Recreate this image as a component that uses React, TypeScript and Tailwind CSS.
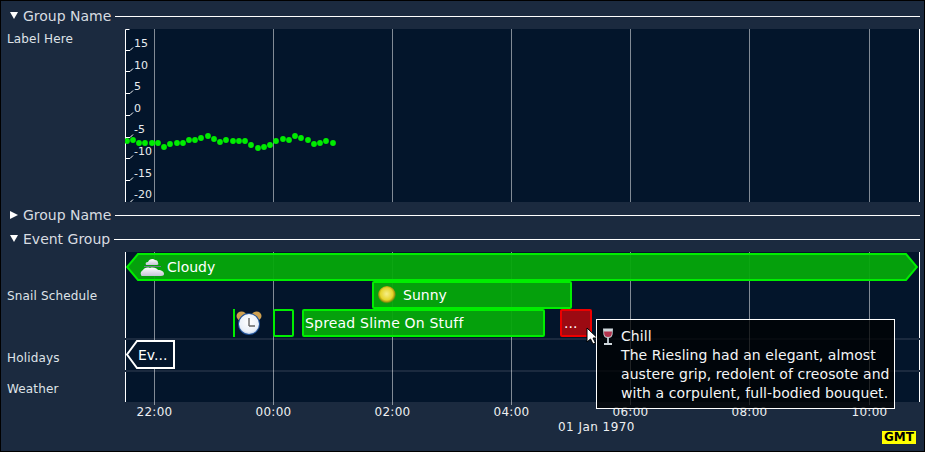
import React from 'react'

const font = { fontFamily: '"DejaVu Sans", Verdana, sans-serif' }

const TIME_LABELS = ['22:00', '00:00', '02:00', '04:00', '06:00', '08:00', '10:00']

const Y_TICKS = [
  { label: '15', y: 21 },
  { label: '10', y: 42 },
  { label: '5', y: 64 },
  { label: '0', y: 86 },
  { label: '-5', y: 108 },
  { label: '-10', y: 129 },
  { label: '-15', y: 151 },
  { label: '-20', y: 173 },
]

// plotted values, read off in plot coordinates
const POINTS: [number, number][] = [
  [2, 112], [8, 111], [14, 114], [20, 114], [27, 114], [33, 114], [39, 118], [45, 115],
  [52, 114], [58, 114], [64, 111], [70, 111], [76, 109], [83, 107], [89, 110], [95, 113],
  [101, 111], [108, 112], [114, 112], [120, 112], [126, 116], [133, 119], [139, 118], [145, 116],
  [151, 112], [158, 110], [164, 111], [170, 107], [176, 109], [183, 111], [189, 115], [195, 114],
  [201, 112], [208, 114],
]

function GroupHeader({ title, open = true }: { title: string; open?: boolean }) {
  return (
    <div className="flex h-6 items-center pl-[9px] pr-[4px]">
      <svg width="8" height="8" viewBox="0 0 8 8" className="mr-[5px] shrink-0">
        {open ? <polygon points="0,0 8,0 4,7" fill="#fff" /> : <polygon points="0,0 8,4 0,8" fill="#fff" />}
      </svg>
      <span className="text-sm leading-none text-[#d8dce1]">{title}</span>
      <div className="ml-[4px] h-px flex-1 bg-white" />
    </div>
  )
}

function GridLines({ tail = false }: { tail?: boolean }) {
  return (
    <div className={`absolute left-[29px] right-0 top-0 flex ${tail ? '-bottom-[3px]' : 'bottom-0'}`}>
      {TIME_LABELS.map((t) => (
        <div key={t} className="w-[119px] shrink-0 last:ml-px last:w-px">
          <div className="h-full w-px bg-white/50" />
        </div>
      ))}
    </div>
  )
}

function ValuePlot() {
  return (
    <div className="relative h-[173px] w-[795px] border-r border-white bg-[#03152b]">
      <GridLines />
      <svg width="795" height="173" className="absolute left-0 top-0">
        <path d="M4.500 0.500H0.500V173" fill="none" stroke="#fff" />
        {Y_TICKS.map((t) => (
          <path key={t.label} d={`M1 ${t.y + 0.5}H5L8 ${t.y - 2.5}`} fill="none" stroke="#fff" />
        ))}
        {POINTS.map(([x, y]) => (
          <circle key={x} cx={x} cy={y} r="2.900" fill="#00ec00" />
        ))}
      </svg>
      <div className="absolute left-[9px] top-[9px] flex flex-col">
        {Y_TICKS.map((t) => (
          <span key={t.label} className="h-[21.6px] text-[11px] leading-[11px] text-[#e8ebee]">
            {t.label}
          </span>
        ))}
      </div>
    </div>
  )
}

function CloudIcon() {
  return (
    <svg width="25" height="20" viewBox="0 0 25 20" className="shrink-0">
      <defs>
        <linearGradient id="cloud" x1="0" y1="0" x2="0" y2="1">
          <stop offset="0" stopColor="#fff" />
          <stop offset="1" stopColor="#c6c4d6" />
        </linearGradient>
      </defs>
      <path d="M6 8c-1-2 0-3 2-3 1-3 5-4 7-2 2 0 3 1 3 3 1 1 0 2-1 2z" fill="url(#cloud)" />
      <rect x="4" y="9" width="17" height="1" fill="#6d7a88" />
      <path d="M1 18c-1-2 0-4 2-5 1-2 4-3 7-2 3-1 7 0 8 2 4 0 6 2 6 4 0 1-1 2-3 2H4c-2 0-3 0-3-1z" fill="url(#cloud)" />
    </svg>
  )
}

function SunIcon() {
  return (
    <svg width="18" height="18" viewBox="0 0 18 18" className="shrink-0">
      <defs>
        <radialGradient id="sun" cx="0.48" cy="0.44" r="0.55">
          <stop offset="0" stopColor="#f6ee88" />
          <stop offset="0.62" stopColor="#e5d42a" />
          <stop offset="0.8" stopColor="#a99a10" />
          <stop offset="1" stopColor="#6f7a0a" stopOpacity="0" />
        </radialGradient>
      </defs>
      <circle cx="9" cy="9" r="9" fill="url(#sun)" />
    </svg>
  )
}

function ClockIcon() {
  return (
    <svg width="26" height="26" viewBox="0 0 26 26" className="ml-px shrink-0">
      <defs>
        <radialGradient id="face" cx="0.5" cy="0.4" r="0.65">
          <stop offset="0" stopColor="#fff" />
          <stop offset="0.75" stopColor="#eaf0f8" />
          <stop offset="1" stopColor="#a8c2e2" />
        </radialGradient>
      </defs>
      <ellipse cx="5.500" cy="6" rx="5" ry="4.500" fill="#cfa050" />
      <ellipse cx="20.500" cy="6" rx="5" ry="4.500" fill="#cfa050" />
      <circle cx="13" cy="14" r="11" fill="#1d4f96" />
      <circle cx="13" cy="14" r="10" fill="url(#face)" />
      <path d="M13 8v8M13 16h6" stroke="#666" strokeWidth="1.400" fill="none" />
    </svg>
  )
}

function WineIcon() {
  return (
    <svg width="14" height="18" viewBox="0 0 14 18" className="shrink-0">
      <path d="M2 0.500h10l-.5 6c-.3 2.500-2 3.500-4.500 3.500S2.800 9 2.500 6.500z" fill="#cfd8dc" />
      <path d="M3 3.500h8l-.4 3c-.3 1.800-1.600 2.500-3.600 2.500s-3.300-.7-3.600-2.500z" fill="#b3344e" />
      <rect x="6" y="10" width="2" height="5" fill="#b0bcc2" />
      <rect x="3" y="15" width="8" height="2" fill="#cfd8dc" />
    </svg>
  )
}

function CloudyBar() {
  return (
    <div className="relative flex h-[28px] w-[792px] items-center pl-[14px] text-sm text-white">
      <svg width="792" height="28" className="absolute left-0 top-0">
        <polygon
          points="12,1 780,1 791,14 780,27 12,27 1,14"
          fill="#05a80b"
          fillOpacity="0.95"
          stroke="#00ee00"
          strokeWidth="2"
        />
      </svg>
      <div className="relative flex items-center gap-[2px]">
        <CloudIcon />
        <span>Cloudy</span>
      </div>
    </div>
  )
}

function EvBar() {
  return (
    <div className="relative flex h-[30px] w-[50px] items-center pl-[12px] text-sm text-white">
      <svg width="50" height="30" className="absolute left-0 top-0">
        <polygon points="11,1 48,1 48,28 11,28 1,14.500" fill="#03152b" stroke="#fff" strokeWidth="2" />
      </svg>
      <span className="relative">Ev...</span>
    </div>
  )
}

function EventPlot() {
  const row = 'relative border-x border-white'
  const sep = 'h-[2px] bg-[#1b2a3f]'
  const bar = 'h-[28px] rounded-[2px] border-2 border-[#00ee00] bg-[#05a80b]/95 text-sm leading-[24px] text-white'
  return (
    <div className="relative flex h-[150px] w-[795px] flex-col bg-[#03152b]">
      <GridLines tail />

      <div className={`${row} h-[86px] pt-px`}>
        <CloudyBar />
        <div className="flex pl-[246px]">
          <div className={`${bar} flex w-[200px] items-center pl-[4px]`}>
            <SunIcon />
            <span className="ml-[7px]">Sunny</span>
          </div>
        </div>
        <div className="flex items-center pl-[107px]">
          <div className="h-[28px] w-[2px] bg-[#00ee00]" />
          <ClockIcon />
          <div className="ml-[11px] h-[28px] w-[21px] rounded-[2px] border-2 border-[#00ee00]" />
          <div className={`${bar} ml-[8px] w-[243px] whitespace-nowrap pl-[1px] tracking-[0.19px]`}>
            Spread Slime On Stuff
          </div>
          <div className="ml-[15px] h-[28px] w-[32px] rounded-[2px] border-2 border-[#ee0000] bg-[#9c0a12] pl-[2px] text-sm leading-[24px] text-white">
            ...
          </div>
        </div>
      </div>

      <div className={sep} />
      <div className={`${row} h-[30px]`}>
        <EvBar />
      </div>
      <div className={sep} />
      <div className={`${row} h-[30px]`} />
    </div>
  )
}

function Tooltip() {
  return (
    <div className="absolute left-[595px] top-[318px] flex h-[90px] w-[299px] gap-[6px] border border-white bg-black/75 pl-[4px] pt-[7px] text-sm leading-[19px] tracking-[0.08px] text-[#f4f5f6]">
      <div className="pt-[1px]">
        <WineIcon />
      </div>
      <div className="whitespace-nowrap">
        <div>Chill</div>
        <div>The Riesling had an elegant, almost</div>
        <div>austere grip, redolent of creosote and</div>
        <div>with a corpulent, full-bodied bouquet.</div>
      </div>
    </div>
  )
}

function Cursor() {
  return (
    <svg width="12" height="18" viewBox="0 0 12 18" className="absolute left-[585px] top-[326px]">
      <path d="M1 1v14l3.500-3 2.500 5 2.500-1-2.500-5h4.500z" fill="#fff" stroke="#000" strokeWidth="1" />
    </svg>
  )
}

export default function App() {
  return (
    <div
      className="relative h-[452px] w-[925px] overflow-hidden border border-black bg-[#1b2a3f] pt-[3px] text-[#dfe3e8]"
      style={font}
    >
      <GroupHeader title="Group Name" />
      <div className="mt-px flex">
        <div className="w-[124px] pl-[6px] pt-[3px] text-xs leading-[14px] tracking-[0.15px]">Label Here</div>
        <ValuePlot />
      </div>

      <div className="mt-px">
        <GroupHeader title="Group Name" open={false} />
        <GroupHeader title="Event Group" />
      </div>

      <div className="mt-px flex">
        <div className="flex w-[124px] flex-col pl-[6px] text-xs leading-[14px] tracking-[0.15px]">
          <div className="flex h-[88px] items-center">Snail Schedule</div>
          <div className="flex h-[32px] items-end pb-[7px]">Holidays</div>
          <div className="flex h-[30px] items-center pt-[4px]">Weather</div>
        </div>
        <EventPlot />
      </div>

      <div className="flex flex-col pt-[3px] text-xs leading-[14px] tracking-[0.3px] text-[#eef0f2]">
        <div className="flex pl-[94px]">
          {TIME_LABELS.map((t) => (
            <span key={t} className="w-[119px] shrink-0 text-center last:ml-px">
              {t}
            </span>
          ))}
        </div>
        <div className="mt-px flex items-start pl-[557px] pr-[8px]">
          <span className="tracking-[0.45px]">01 Jan 1970</span>
          <span className="ml-auto mt-[11px] bg-[#ffff00] px-[2px] text-xs font-bold leading-[13px] tracking-normal text-black">
            GMT
          </span>
        </div>
      </div>

      <Cursor />
      <Tooltip />
    </div>
  )
}
